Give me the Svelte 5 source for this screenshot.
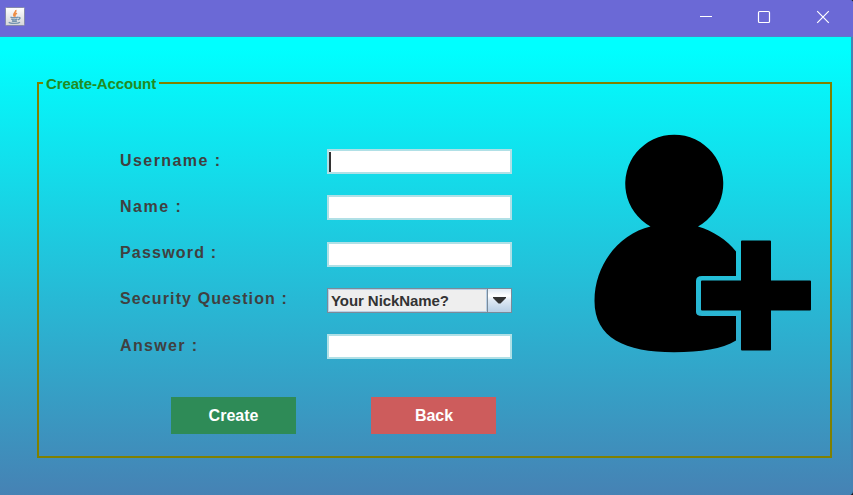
<script>
  const fields = [
    { label: 'Username :', spacing: 1.43, drop: 1, focused: true },
    { label: 'Name :', spacing: 1.5, drop: 1 },
    { label: 'Password :', spacing: 1.2, drop: 0, shift: true },
    { label: 'Security Question :', spacing: 1.12, drop: 0, value: 'Your NickName?' },
    { label: 'Answer :', spacing: 1.35, drop: 1 }
  ];
</script>

<div class="window">
  <header>
    <svg class="java" width="20" height="20" viewBox="0 0 20 20">
      <defs>
        <linearGradient id="tile" x1="0" y1="0" x2="0" y2="1">
          <stop offset="0" stop-color="#fff" />
          <stop offset="1" stop-color="#d4d5d8" />
        </linearGradient>
      </defs>
      <rect x="0.5" y="0.5" width="19" height="18" rx="1" fill="url(#tile)" stroke="#858aab" />
      <path d="M10.8 3C11.6 5 7.3 6.4 9.3 9.4M12 6.2C9.6 7.2 9.5 8.2 10.4 9.6" fill="none" stroke="#ee8d45" stroke-width="1.6" />
      <path d="M5.5 10.2C7 11 11 11 13 10.2M6.3 12.2C8 13 10.5 13 12.5 12.2M7 14C8.5 14.5 10.3 14.5 12 14M13.3 10.4C15.8 10 15.5 12.3 13 12.8M3.8 15.2C5 16.6 13 16.8 15 15.3" fill="none" stroke="#7494b0" stroke-width="1.4" />
    </svg>
    <div class="controls">
      <svg width="58" height="36" viewBox="0 0 58 36"><path d="M20 16.5H32" stroke="#fff" /></svg>
      <svg width="58" height="36" viewBox="0 0 58 36"><rect x="20.5" y="11.5" width="11" height="11" rx="1" fill="none" stroke="#fff" stroke-width="1.2" /></svg>
      <svg width="58" height="36" viewBox="0 0 58 36"><path d="M21.2 11.2L32.8 22.8M32.8 11.2L21.2 22.8" stroke="#fff" stroke-width="1.2" /></svg>
    </div>
  </header>
  <main>
    <fieldset>
      <legend>Create-Account</legend>
      <div class="body">
        <div class="form">
          <div class="fields">
            {#each fields as field}
              <div class="row" class:shift={field.shift}>
                <span class="label" style="letter-spacing: {field.spacing}px; padding-top: {field.drop}px">{field.label}</span>
                {#if field.value}
                  <div class="combo">
                    <span class="choice">{field.value}</span>
                    <span class="arrow">
                      <svg width="13" height="7" viewBox="0 0 13 7"><path d="M0 0H13V1L7.5 6.5H5.5L0 1Z" fill="#333" /></svg>
                    </span>
                  </div>
                {:else}
                  <div class="input">{#if field.focused}<i class="caret"></i>{/if}</div>
                {/if}
              </div>
            {/each}
          </div>
          <div class="actions">
            <button class="create">Create</button>
            <button class="back">Back</button>
          </div>
        </div>
        <svg class="user" width="220" height="220" viewBox="0 0 220 220">
          <path d="M56.5 92.5A49 49 0 1 1 104 92.5C118.500 96.500 133 106 142 117.500V142H108Q102 142 102 147V178Q102 182 108 182H142V206.500C128 215 107 218.200 80 218.200C31 218.200 0.500 204 0.500 167C0.500 129 27 99 56.500 92.500Z" />
          <path d="M147 107.500Q147 106.500 148 106.500H176Q177 106.500 177 107.500V146.500H216Q217 146.500 217 147.500V175.500Q217 176.500 216 176.500H177V215.500Q177 216.500 176 216.500H148Q147 216.500 147 215.500V176.500H108Q107 176.500 107 175.500V147.500Q107 146.500 108 146.500H147Z" />
        </svg>
      </div>
    </fieldset>
  </main>
</div>

<style>
  :global(body) {
    background: #15131c;
    overflow: hidden;
  }
  .window {
    box-sizing: border-box;
    width: 853px;
    height: 495px;
    display: flex;
    flex-direction: column;
    overflow: hidden;
    border-radius: 0 3px 4px 0;
    background: #4682b4;
    font-family: "Liberation Sans", Arial, sans-serif;
    font-weight: bold;
    color: #404040;
  }
  header {
    height: 37px;
    flex: none;
    box-sizing: border-box;
    border-bottom: 1px solid #5c7bc5;
    background: #6b69d6;
    display: flex;
    justify-content: space-between;
  }
  .java {
    margin: 7px 0 0 5px;
  }
  .controls {
    display: flex;
    margin-right: -1px;
  }
  main {
    flex: 1;
    box-sizing: border-box;
    margin-right: 2px;
    padding: 37px 19px 0 37px;
    background: linear-gradient(#00ffff 0, #00ffff 12px, #4682b4 100%);
  }
  fieldset {
    box-sizing: border-box;
    width: 795px;
    height: 384px;
    margin: 0;
    padding: 0 0 0 4px;
    border: 2px solid #808000;
    min-width: 0;
  }
  legend {
    height: 18px;
    box-sizing: border-box;
    padding: 0 3px;
    font-size: 15px;
    line-height: 20px;
    letter-spacing: -0.12px;
    color: #228b22;
    white-space: nowrap;
  }
  .body {
    display: flex;
    padding-top: 41px;
  }
  .form {
    width: 469px;
    margin-left: 77px;
    padding-top: 16px;
  }
  .fields {
    display: flex;
    flex-direction: column;
    gap: 21px;
  }
  .row {
    display: flex;
    height: 25px;
  }
  .row.shift {
    margin-top: 1px;
  }
  .label {
    width: 207px;
    font-size: 16px;
    line-height: 22px;
    white-space: nowrap;
  }
  .input {
    box-sizing: border-box;
    width: 185px;
    height: 25px;
    border: 2px solid #b0e0e6;
    background: #fff;
    padding-top: 1px;
  }
  .caret {
    display: block;
    width: 2px;
    height: 20px;
    background: #333;
  }
  .combo {
    box-sizing: border-box;
    width: 185px;
    height: 25px;
    border: 1px solid #7a8a99;
    display: flex;
  }
  .choice {
    box-sizing: border-box;
    width: 159px;
    border: 1px solid #b8cfe5;
    background: #eee;
    padding-left: 2px;
    font-size: 15px;
    line-height: 22px;
    letter-spacing: -0.07px;
    color: #333;
    white-space: nowrap;
  }
  .arrow {
    flex: 1;
    display: flex;
    align-items: center;
    justify-content: center;
    border-left: 1px solid #7a8a99;
    background: linear-gradient(#dde8f3 0, #fff 30%, #dde8f3 50%, #b8cfe5 100%);
  }
  .actions {
    display: flex;
    gap: 75px;
    margin: 38px 0 0 51px;
  }
  button {
    width: 125px;
    height: 37px;
    padding: 0;
    border: 0;
    font: bold 16px "Liberation Sans", Arial, sans-serif;
    color: #fff;
  }
  .create {
    background: #2e8b57;
  }
  .back {
    padding-left: 1px;
    background: #cd5c5c;
  }
  .user {
    margin: 1px 0 0 5px;
    flex: none;
  }
</style>
